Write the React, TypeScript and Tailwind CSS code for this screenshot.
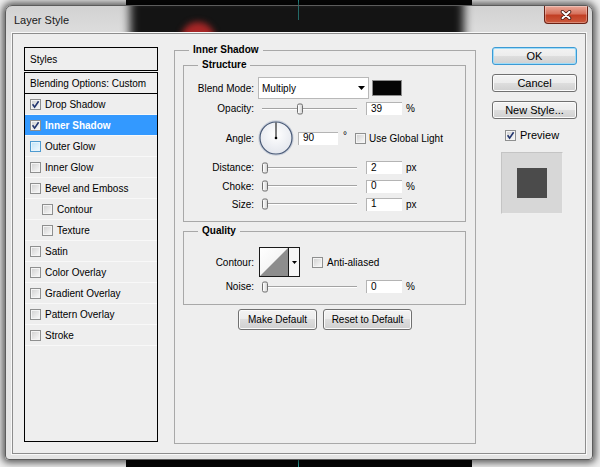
import React from 'react';

function CheckBox({ checked = false, hover = false }: { checked?: boolean; hover?: boolean }) {
  return (
    <span
      className={
        hover
          ? 'relative flex h-[11px] w-[11px] shrink-0 border border-[#4f9bd0] bg-[linear-gradient(135deg,#bfe2f7,#f2fafe)] shadow-[inset_0_0_0_1px_#e6f4fc]'
          : 'relative flex h-[11px] w-[11px] shrink-0 border border-[#8e8f8f] bg-[linear-gradient(135deg,#cfcfcf,#fbfbfb)] shadow-[inset_0_0_0_1px_#f4f4f4]'
      }
    >
      {checked && (
        <svg width="9" height="9" viewBox="0 0 9 9" className="absolute left-0 top-0">
          <path d="M1.6 4.3 L3.6 7.1 L7.6 1.2" fill="none" stroke="#23366f" strokeWidth="1.6" />
        </svg>
      )}
    </span>
  );
}

function Slider({ pct }: { pct: number }) {
  return (
    <div className="relative h-full w-[104px]">
      <div className="absolute left-[4px] right-[5px] top-1/2 h-[2px] -translate-y-1/2 border-t border-[#a3a3a3] bg-white" />
      <div
        className="absolute top-1/2 h-[11px] w-[6px] -translate-y-1/2 rounded-[2px] border border-[#707070] bg-[linear-gradient(90deg,#ffffff,#d6d6d6)]"
        style={{ left: 4 + pct * 89 }}
      />
    </div>
  );
}

function NumInput({ value, wide = false }: { value: string; wide?: boolean }) {
  return (
    <div
      className={
        wide
          ? 'flex h-[13px] w-[40px] items-center bg-white pl-[5px] leading-none shadow-[inset_1px_1px_0_#b4b4b4]'
          : 'flex h-[13px] w-[36px] items-center bg-white pl-[5px] leading-none shadow-[inset_1px_1px_0_#b4b4b4]'
      }
    >
      {value}
    </div>
  );
}

function Label({ children }: { children: React.ReactNode }) {
  return <span className="w-[70px] shrink-0 text-right">{children}</span>;
}

function SliderRow({
  label,
  pct,
  value,
  unit,
  rowClass,
}: {
  label: string;
  pct: number;
  value: string;
  unit: string;
  rowClass: string;
}) {
  return (
    <div className={rowClass}>
      <Label>{label}</Label>
      <div className="ml-[4px] flex h-full items-center">
        <Slider pct={pct} />
        <div className="ml-[4px]">
          <NumInput value={value} />
        </div>
        <span className="ml-[4px]">{unit}</span>
      </div>
    </div>
  );
}

function WinButton({
  children,
  primary = false,
}: {
  children: React.ReactNode;
  primary?: boolean;
}) {
  return (
    <div
      className={
        primary
          ? 'flex h-[18px] w-full items-center justify-center rounded-[3px] border border-[#3c9ad4] bg-[linear-gradient(180deg,#f3f3f3_0%,#ececec_50%,#dedede_50%,#d0d0d0_100%)] text-[11px] shadow-[inset_0_0_0_1px_#9fdcf8]'
          : 'flex h-[18px] w-full items-center justify-center rounded-[3px] border border-[#707070] bg-[linear-gradient(180deg,#f3f3f3_0%,#ececec_50%,#dedede_50%,#d0d0d0_100%)] text-[11px] shadow-[inset_0_0_0_1px_#fbfbfb]'
      }
    >
      {children}
    </div>
  );
}

const items = [
  { label: 'Drop Shadow', checked: true },
  { label: 'Inner Shadow', checked: true, selected: true },
  { label: 'Outer Glow', hover: true },
  { label: 'Inner Glow' },
  { label: 'Bevel and Emboss' },
  { label: 'Contour', indent: true },
  { label: 'Texture', indent: true },
  { label: 'Satin' },
  { label: 'Color Overlay' },
  { label: 'Gradient Overlay' },
  { label: 'Pattern Overlay' },
  { label: 'Stroke' },
];

export default function App() {
  return (
    <div className="relative h-[467px] w-[600px] overflow-hidden bg-[#eeeeee] p-[5px] font-['Liberation_Sans',Arial,sans-serif] text-[10px] text-black">
      {/* canvas behind the dialog */}
      <div className="absolute left-[126px] top-0 h-full w-[346px] bg-[#070707]" />
      <div className="absolute left-[298px] top-0 h-full w-px bg-[#2fa7a3]" />

      {/* window */}
      <div className="relative flex h-[455px] w-[588px] flex-col overflow-hidden rounded-t-[7px] rounded-b-[4px] border border-[#5c5c5c] bg-[linear-gradient(180deg,#d2d2d2,#e2e2e2_40px,#e4e4e4)] shadow-[0_0_7px_3px_rgba(0,0,0,0.6)]">
        {/* glass reflection of the canvas */}
        <div className="absolute left-[124px] top-[-8px] h-[46px] w-[334px] bg-[#141414] blur-[5px]" />
        <div className="absolute left-[175px] top-[16px] h-[34px] w-[34px] rounded-full bg-[#a82626] blur-[3px]" />
        <div className="absolute left-[292px] top-0 h-[14px] w-px bg-[#2a8f8c] opacity-70" />

        {/* title bar */}
        <div className="relative flex h-[27px] shrink-0 items-start justify-between">
          <span className="ml-[8px] mt-[8px] text-[11px] leading-[12px] text-[#1a1a1a]">Layer Style</span>
          <div className="mr-[4px] flex h-[18px] w-[44px] items-center justify-center rounded-b-[4px] border border-t-0 border-[#6b2215] bg-[linear-gradient(180deg,#eaa898,#d7735e_45%,#c23f24_55%,#cc5a3e)] shadow-[inset_0_0_0_1px_rgba(255,255,255,0.3)]">
            <svg width="12" height="10" viewBox="0 0 12 10">
              <path d="M2.5 1.8 L9.5 8.2 M9.5 1.8 L2.5 8.2" stroke="#4a1d14" strokeWidth="3.6" strokeLinecap="round" />
              <path d="M2.5 1.8 L9.5 8.2 M9.5 1.8 L2.5 8.2" stroke="#ffffff" strokeWidth="2" strokeLinecap="round" />
            </svg>
          </div>
        </div>

        {/* client area */}
        <div className="relative mx-[6px] flex h-[421px] shrink-0 border border-[#8d8d8d] bg-[#eeeeee] pl-[11px] shadow-[0_0_0_1px_#f8f8f8]">
          {/* left list */}
          <div className="mt-[13px] flex w-[134px] shrink-0 flex-col">
            <div className="flex h-[24px] items-center border border-black pl-[5px]">Styles</div>
            <div className="mt-[1px] h-[370px] border border-black">
              <div className="flex h-[21px] items-center border-b border-black pl-[5px]">Blending Options: Custom</div>
              {items.map((it) => (
                <div
                  key={it.label}
                  className={
                    it.selected
                      ? 'flex h-[21px] items-center gap-[4px] border-b border-[#f8f8f8] bg-[#3399ff] pl-[5px] font-bold text-white'
                      : it.indent
                        ? 'flex h-[21px] items-center gap-[4px] border-b border-[#f8f8f8] pl-[17px]'
                        : 'flex h-[21px] items-center gap-[4px] border-b border-[#f8f8f8] pl-[5px]'
                  }
                >
                  <CheckBox checked={it.checked} hover={it.hover} />
                  <span>{it.label}</span>
                </div>
              ))}
            </div>
          </div>

          {/* middle panel */}
          <div className="ml-[16px] mt-[10px] w-[302px] shrink-0">
            <fieldset className="h-[400px] border border-[#a8a8a8]">
              <legend className="ml-[14px] px-[4px] font-bold leading-[12px]">Inner Shadow</legend>

              <fieldset className="ml-[8px] mr-[9px] mt-[3px] border border-[#a8a8a8] pb-[8px]">
                <legend className="ml-[14px] px-[4px] font-bold leading-[12px]">Structure</legend>

                <div className="mt-[6px] flex h-[22px] items-center">
                  <Label>Blend Mode:</Label>
                  <div className="ml-[4px] flex h-[22px] w-[111px] items-center justify-between border border-[#b8b8b8] bg-white pl-[3px] pr-[3px]">
                    <span>Multiply</span>
                    <svg width="7" height="4" viewBox="0 0 7 4">
                      <polygon points="0,0 7,0 3.5,4" fill="#000" />
                    </svg>
                  </div>
                  <div className="ml-[3px] h-[16px] w-[30px] border border-[#8c8c8c] bg-[#050505]" />
                </div>

                <SliderRow label="Opacity:" pct={0.39} value="39" unit="%" rowClass="flex h-[19px] items-center" />

                <div className="mt-[2px] flex h-[36px] items-center">
                  <Label>Angle:</Label>
                  <div className="ml-[4px] flex items-center">
                    <svg width="36" height="36" viewBox="0 0 36 36">
                      <defs>
                        <radialGradient id="ag" cx="50%" cy="40%" r="60%">
                          <stop offset="0" stopColor="#ffffff" />
                          <stop offset="1" stopColor="#e2e5ec" />
                        </radialGradient>
                      </defs>
                      <circle cx="18" cy="18" r="17" fill="url(#ag)" stroke="#c9cfda" strokeWidth="1.4" />
                      <circle cx="18" cy="18" r="16" fill="none" stroke="#475875" strokeWidth="1.2" />
                      <line x1="18" y1="18" x2="18" y2="2.5" stroke="#000" strokeWidth="1" />
                      <circle cx="18" cy="18" r="1.3" fill="#000" />
                    </svg>
                    <div className="ml-[4px]">
                      <NumInput value="90" wide />
                    </div>
                    <span className="ml-[5px] mb-[5px]">°</span>
                    <div className="ml-[8px] flex items-center">
                      <CheckBox />
                      <span className="ml-[3px]">Use Global Light</span>
                    </div>
                  </div>
                </div>

                <SliderRow label="Distance:" pct={0} value="2" unit="px" rowClass="mt-[2px] flex h-[19px] items-center" />
                <SliderRow label="Choke:" pct={0} value="0" unit="%" rowClass="flex h-[18px] items-center" />
                <SliderRow label="Size:" pct={0} value="1" unit="px" rowClass="flex h-[18px] items-center" />
              </fieldset>

              <fieldset className="ml-[8px] mr-[9px] mt-[3px] border border-[#a8a8a8] pb-[8px]">
                <legend className="ml-[14px] px-[4px] font-bold leading-[12px]">Quality</legend>

                <div className="mt-[10px] flex h-[30px] items-center">
                  <Label>Contour:</Label>
                  <div className="ml-[5px] flex h-[30px] w-[41px] border border-[#1a1a1a] bg-white">
                    <svg width="28" height="28" viewBox="0 0 28 28">
                      <defs>
                        <linearGradient id="cg" x1="0" y1="0" x2="1" y2="1">
                          <stop offset="0" stopColor="#ffffff" />
                          <stop offset="1" stopColor="#ececec" />
                        </linearGradient>
                      </defs>
                      <rect width="28" height="28" fill="url(#cg)" />
                      <polygon points="0,28 28,0 28,28" fill="#8d8d8d" />
                    </svg>
                    <div className="flex w-[11px] items-center justify-center border-l border-[#1a1a1a] bg-[#f6f6f6]">
                      <svg width="5" height="3" viewBox="0 0 5 3">
                        <polygon points="0,0 5,0 2.5,3" fill="#000" />
                      </svg>
                    </div>
                  </div>
                  <div className="ml-[12px] flex items-center">
                    <CheckBox />
                    <span className="ml-[4px]">Anti-aliased</span>
                  </div>
                </div>

                <SliderRow label="Noise:" pct={0} value="0" unit="%" rowClass="flex h-[19px] items-center" />
              </fieldset>

              <div className="mt-[4px] flex justify-center gap-[6px]">
                <div className="w-[79px]">
                  <div className="flex h-[21px] w-full items-center justify-center rounded-[3px] border border-[#707070] bg-[linear-gradient(180deg,#f3f3f3_0%,#ececec_50%,#dedede_50%,#d0d0d0_100%)] shadow-[inset_0_0_0_1px_#fbfbfb]">
                    Make Default
                  </div>
                </div>
                <div className="w-[89px]">
                  <div className="flex h-[21px] w-full items-center justify-center rounded-[3px] border border-[#707070] bg-[linear-gradient(180deg,#f3f3f3_0%,#ececec_50%,#dedede_50%,#d0d0d0_100%)] shadow-[inset_0_0_0_1px_#fbfbfb]">
                    Reset to Default
                  </div>
                </div>
              </div>
            </fieldset>
          </div>

          {/* right column */}
          <div className="ml-[16px] mt-[13px] flex w-[85px] shrink-0 flex-col">
            <WinButton primary>OK</WinButton>
            <div className="mt-[9px]">
              <WinButton>Cancel</WinButton>
            </div>
            <div className="mt-[9px]">
              <WinButton>New Style...</WinButton>
            </div>
            <div className="ml-[13px] mt-[8px] flex items-center">
              <CheckBox checked />
              <span className="ml-[4px] text-[11px]">Preview</span>
            </div>
            <div className="ml-[9px] mt-[8px] flex h-[62px] w-[62px] items-center justify-center border border-[#c4c4c4] border-b-[#efefef] border-r-[#efefef] bg-[#d7d7d7]">
              <div className="h-[30px] w-[30px] bg-[#4b4b4b]" />
            </div>
          </div>
        </div>
      </div>
    </div>
  );
}
